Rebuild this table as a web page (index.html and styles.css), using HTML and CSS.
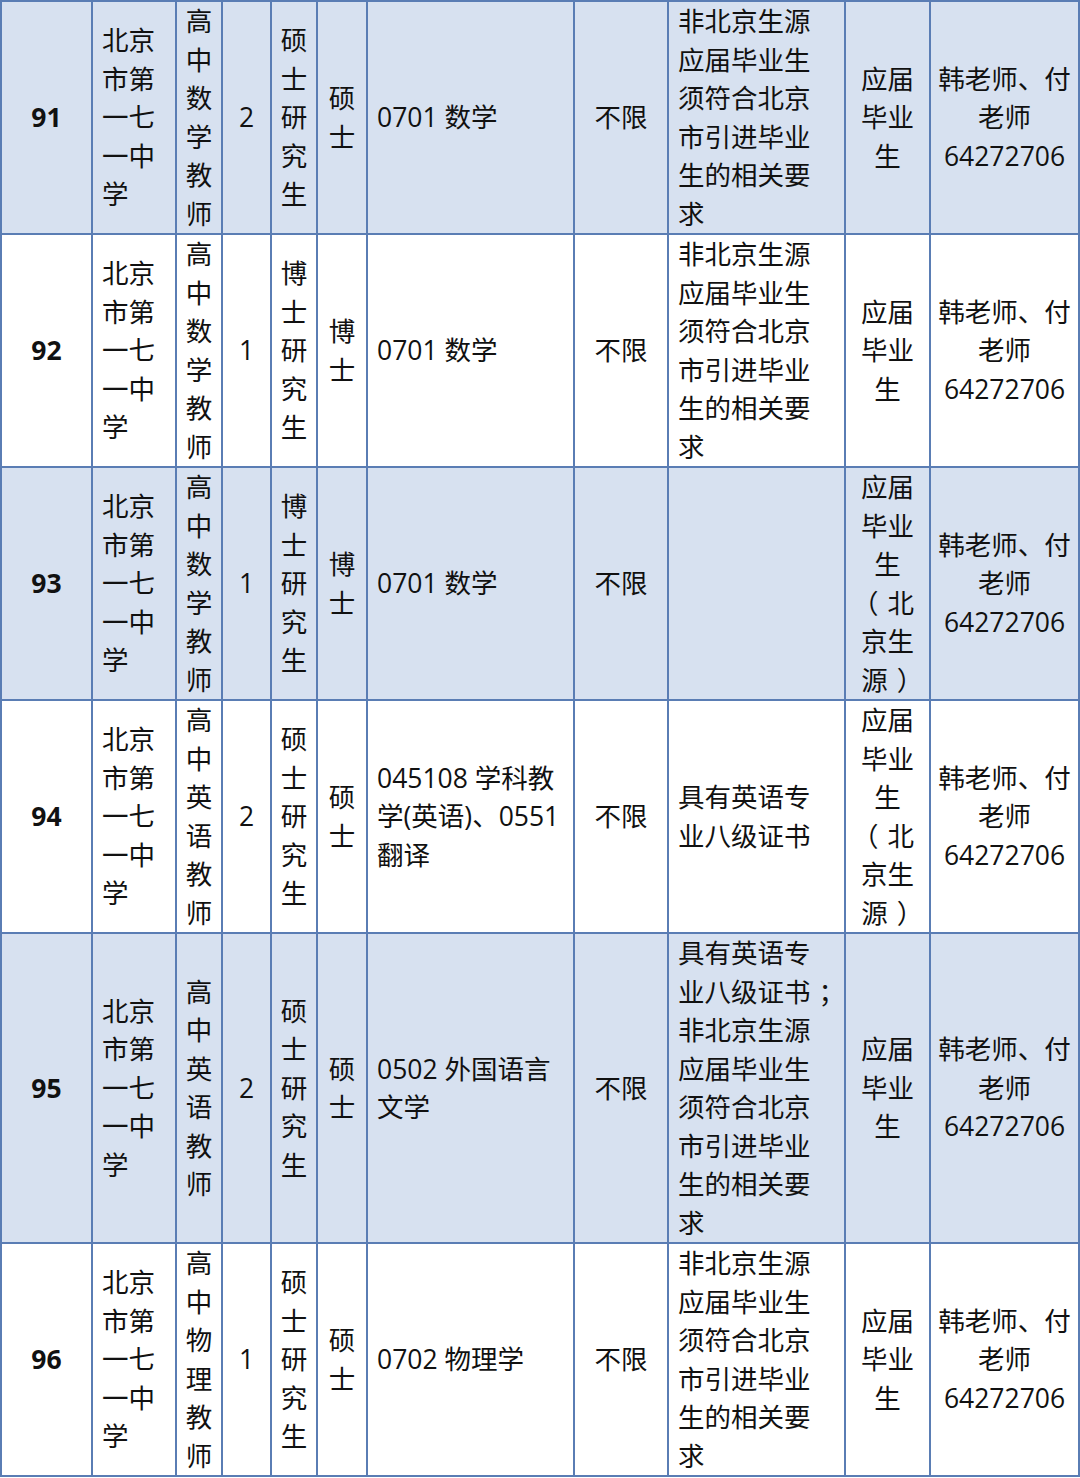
FILE: index.html
```html
<!DOCTYPE html>
<html lang="zh-CN">
<head>
<meta charset="utf-8">
<title>招聘岗位表</title>
<link rel="stylesheet" href="styles.css">
</head>
<body>
<table class="jobs">
  <colgroup>
    <col class="w-no"><col class="w-school"><col class="w-pos"><col class="w-count"><col class="w-edu"><col class="w-deg"><col class="w-major"><col class="w-age"><col class="w-req"><col class="w-src"><col class="w-contact">
  </colgroup>
  <tbody>
    <tr class="alt">
      <td class="c-no">91</td>
      <td class="c-school">北京市第一七一中学</td>
      <td class="c-narrow">高中数学教师</td>
      <td class="c-center">2</td>
      <td class="c-narrow">硕士研究生</td>
      <td class="c-narrow">硕士</td>
      <td class="c-major">0701 数学</td>
      <td class="c-center">不限</td>
      <td class="c-req">非北京生源应届毕业生须符合北京市引进毕业生的相关要求</td>
      <td class="c-src">应届毕业生</td>
      <td class="c-contact">韩老师、付老师64272706</td>
    </tr>
    <tr>
      <td class="c-no">92</td>
      <td class="c-school">北京市第一七一中学</td>
      <td class="c-narrow">高中数学教师</td>
      <td class="c-center">1</td>
      <td class="c-narrow">博士研究生</td>
      <td class="c-narrow">博士</td>
      <td class="c-major">0701 数学</td>
      <td class="c-center">不限</td>
      <td class="c-req">非北京生源应届毕业生须符合北京市引进毕业生的相关要求</td>
      <td class="c-src">应届毕业生</td>
      <td class="c-contact">韩老师、付老师64272706</td>
    </tr>
    <tr class="alt">
      <td class="c-no">93</td>
      <td class="c-school">北京市第一七一中学</td>
      <td class="c-narrow">高中数学教师</td>
      <td class="c-center">1</td>
      <td class="c-narrow">博士研究生</td>
      <td class="c-narrow">博士</td>
      <td class="c-major">0701 数学</td>
      <td class="c-center">不限</td>
      <td class="c-req"></td>
      <td class="c-src">应届毕业生<span class="p-open">（</span>北京生源<span class="p-close">）</span></td>
      <td class="c-contact">韩老师、付老师64272706</td>
    </tr>
    <tr>
      <td class="c-no">94</td>
      <td class="c-school">北京市第一七一中学</td>
      <td class="c-narrow">高中英语教师</td>
      <td class="c-center">2</td>
      <td class="c-narrow">硕士研究生</td>
      <td class="c-narrow">硕士</td>
      <td class="c-major">045108 学科教学(英语)、0551 翻译</td>
      <td class="c-center">不限</td>
      <td class="c-req">具有英语专业八级证书</td>
      <td class="c-src">应届毕业生<span class="p-open">（</span>北京生源<span class="p-close">）</span></td>
      <td class="c-contact">韩老师、付老师64272706</td>
    </tr>
    <tr class="alt">
      <td class="c-no">95</td>
      <td class="c-school">北京市第一七一中学</td>
      <td class="c-narrow">高中英语教师</td>
      <td class="c-center">2</td>
      <td class="c-narrow">硕士研究生</td>
      <td class="c-narrow">硕士</td>
      <td class="c-major">0502 外国语言文学</td>
      <td class="c-center">不限</td>
      <td class="c-req">具有英语专业八级证书<span class="semi">；</span>非北京生源应届毕业生须符合北京市引进毕业生的相关要求</td>
      <td class="c-src">应届毕业生</td>
      <td class="c-contact">韩老师、付老师64272706</td>
    </tr>
    <tr>
      <td class="c-no">96</td>
      <td class="c-school">北京市第一七一中学</td>
      <td class="c-narrow">高中物理教师</td>
      <td class="c-center">1</td>
      <td class="c-narrow">硕士研究生</td>
      <td class="c-narrow">硕士</td>
      <td class="c-major">0702 物理学</td>
      <td class="c-center">不限</td>
      <td class="c-req">非北京生源应届毕业生须符合北京市引进毕业生的相关要求</td>
      <td class="c-src">应届毕业生</td>
      <td class="c-contact">韩老师、付老师64272706</td>
    </tr>
  </tbody>
</table>
</body>
</html>
```

FILE: styles.css
```css
html, body {
  margin: 0;
  padding: 0;
  background: #ffffff;
}

body {
  font-family: "Open Sans", "Noto Sans CJK SC", sans-serif;
  font-size: 26.5px;
  line-height: 38.5px;
  color: #111111;
}

.jobs {
  border-collapse: collapse;
  table-layout: fixed;
  width: 1079px;
}

.w-no { width: 91px; }
.w-school { width: 84px; }
.w-pos { width: 46px; }
.w-count { width: 49px; }
.w-edu { width: 46px; }
.w-deg { width: 50px; }
.w-major { width: 207px; }
.w-age { width: 94px; }
.w-req { width: 177px; }
.w-src { width: 85px; }
.w-contact { width: 149px; }

.jobs td {
  border: 2px solid #5a7db4;
  padding: 0;
  vertical-align: middle;
}

.jobs tr.alt td {
  background: #d7e1f0;
}

.c-no {
  text-align: center;
  font-weight: 700;
}

.c-school {
  text-align: left;
  padding: 0 12px 0 9px !important;
}

.c-narrow {
  text-align: center;
  padding: 0 6px !important;
}

.c-center {
  text-align: center;
}

.c-major {
  text-align: left;
  padding: 0 4px 0 9px !important;
}

.c-req {
  text-align: left;
  padding: 0 10px 0 9px !important;
}

.c-src {
  text-align: center;
  padding: 0 10px !important;
}

.c-contact {
  text-align: center;
  padding: 0 5px !important;
}

/* full-width punctuation set with centred glyphs, as in the source font */
.p-open {
  font-feature-settings: "halt" 1;
  padding: 0 9px 0 4px;
}

.p-close {
  font-feature-settings: "halt" 1;
  padding: 0 4px 0 9px;
}

.semi {
  font-feature-settings: "halt" 1;
  padding-left: 8px;
}
```
